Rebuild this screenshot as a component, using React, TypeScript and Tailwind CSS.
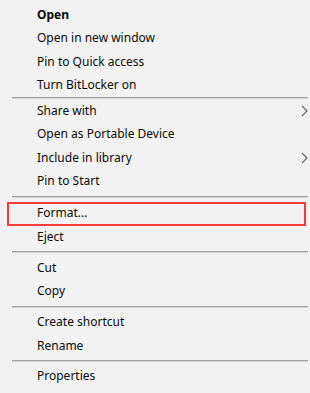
import React from "react";

type Entry =
  | { kind: "item"; label: string; bold?: boolean; sub?: boolean; marked?: boolean }
  | { kind: "sep"; h: string };

const entries: Entry[] = [
  { kind: "item", label: "Open", bold: true },
  { kind: "item", label: "Open in new window" },
  { kind: "item", label: "Pin to Quick access" },
  { kind: "item", label: "Turn BitLocker on" },
  { kind: "sep", h: "h-[2px]" },
  { kind: "item", label: "Share with", sub: true },
  { kind: "item", label: "Open as Portable Device" },
  { kind: "item", label: "Include in library", sub: true },
  { kind: "item", label: "Pin to Start" },
  { kind: "sep", h: "h-[8.5px]" },
  { kind: "item", label: "Format...", marked: true },
  { kind: "item", label: "Eject" },
  { kind: "sep", h: "h-[7.5px]" },
  { kind: "item", label: "Cut" },
  { kind: "item", label: "Copy" },
  { kind: "sep", h: "h-[7.5px]" },
  { kind: "item", label: "Create shortcut" },
  { kind: "item", label: "Rename" },
  { kind: "sep", h: "h-[7px]" },
  { kind: "item", label: "Properties" },
];

function Chevron() {
  return (
    <svg width="7" height="12" viewBox="0 0 7 12" className="absolute right-[2px] top-1/2 -translate-y-1/2">
      <path d="M1 1 L6 6 L1 11" fill="none" stroke="#5f5f5f" strokeWidth="1.1" />
    </svg>
  );
}

export default function App() {
  return (
    <div
      className="w-[310px] h-[393px] bg-[#f2f2f2] pt-[3px] text-[12px] text-[#0a0a0a]"
      style={{ fontFamily: '"Noto Sans", "Open Sans", sans-serif' }}
    >
      {entries.map((e, i) =>
        e.kind === "sep" ? (
          <div key={i} className={`${e.h} flex items-center pl-[12px] pr-[2px]`}>
            <div className="w-full h-[2px] border-t border-[#a3a3a3] bg-[#d2d2d2]" />
          </div>
        ) : (
          <div key={i} className="relative h-[23.5px] flex items-center pl-[37px]">
            <span className={e.bold ? "font-bold" : ""}>{e.label}</span>
            {e.sub && <Chevron />}
            {e.marked && (
              <span className="absolute left-[7px] right-[4px] top-0 bottom-[-1px] border-2 border-[#f8393d]" />
            )}
          </div>
        )
      )}
    </div>
  );
}
